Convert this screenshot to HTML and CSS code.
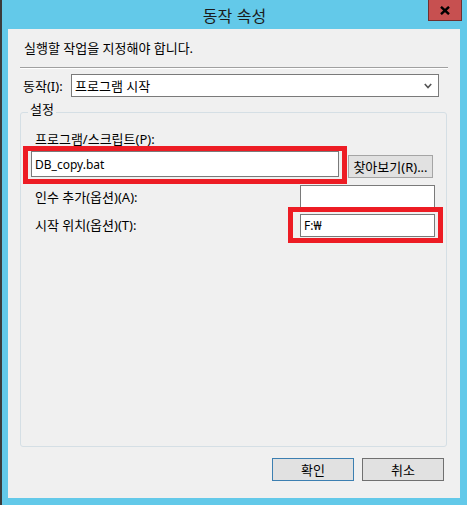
FILE: index.html
```html
<!DOCTYPE html>
<html lang="ko">
<head>
<meta charset="utf-8">
<title>동작 속성</title>
<link rel="stylesheet" href="styles.css">
</head>
<body>
<div class="window">
  <div class="titlebar">
    <div class="spacer"></div>
    <div class="title">동작 속성</div>
    <div class="close" aria-label="닫기">
      <svg width="10" height="9" viewBox="0 0 10 9"><path d="M1 0.8 L9 8.2 M9 0.8 L1 8.2" stroke="#000" stroke-width="2.4" fill="none"/></svg>
    </div>
  </div>
  <div class="panel">
    <p class="intro">실행할 작업을 지정해야 합니다.</p>
    <div class="sep"></div>
    <div class="action-row">
      <span class="action-label">동작(I):</span>
      <div class="combo">
        <span>프로그램 시작</span>
        <svg width="8" height="6" viewBox="0 0 8 6"><path d="M0.8 1 L4 4.6 L7.2 1" stroke="#555" stroke-width="1.6" fill="none"/></svg>
      </div>
    </div>
    <fieldset class="group">
      <legend>설정</legend>
      <div class="prog-label">프로그램/스크립트(P):</div>
      <div class="prog-row">
        <div class="mark mark-prog"><div class="textbox tall">DB_copy.bat</div></div>
        <button class="btn browse">찾아보기(R)...</button>
      </div>
      <div class="field-row args">
        <span class="field-label">인수 추가(옵션)(A):</span>
        <div class="textbox small"></div>
      </div>
      <div class="field-row start">
        <span class="field-label">시작 위치(옵션)(T):</span>
        <div class="mark mark-start"><div class="textbox small">F:₩</div></div>
      </div>
    </fieldset>
    <div class="buttons">
      <button class="btn dlg ok">확인</button>
      <button class="btn dlg">취소</button>
    </div>
  </div>
</div>
</body>
</html>
```
FILE: styles.css
```css
* { box-sizing: border-box; }
html, body { margin: 0; padding: 0; }
body {
  width: 467px;
  height: 505px;
  overflow: hidden;
  font-family: "Noto Sans", "Noto Sans CJK KR", sans-serif;
  font-size: 13px;
  color: #000;
  background: #63c9e9;
}
.window {
  width: 467px;
  height: 505px;
  background: #63c9e9;
  border-left: 2px solid #3b3b3b;
  display: flex;
  flex-direction: column;
}
.titlebar {
  height: 29px;
  display: grid;
  grid-template-columns: 1fr auto 1fr;
  align-items: start;
}
.title {
  font-family: "Noto Sans CJK KR", sans-serif;
  font-size: 16px;
  line-height: 30px;
  color: #1b1b1b;
}
.close {
  justify-self: end;
  margin-right: 5px;
  width: 34px;
  height: 21px;
  background: #c75050;
  border: 1px solid #6e3030;
  border-top: none;
  display: flex;
  align-items: center;
  justify-content: center;
}
.panel {
  margin-left: 6px;
  width: 452px;
  height: 469px;
  background: #f0f0f0;
  display: flex;
  flex-direction: column;
  padding-bottom: 17px;
}
.intro {
  margin: 11px 0 0 16px;
  line-height: 16px;
}
.sep {
  margin: 11px 12px 0 12px;
  height: 2px;
  border-top: 1px solid #a0a0a0;
  border-bottom: 1px solid #ffffff;
}
.action-row {
  margin-top: 5px;
  display: flex;
  align-items: center;
  padding: 0 21px 0 15px;
}
.action-label { width: 48px; line-height: 16px; }
.combo {
  flex: 1;
  height: 23px;
  background: #fff;
  border: 1px solid #7a7a7a;
  display: flex;
  align-items: center;
  justify-content: space-between;
  padding: 0 6px 0 3px;
}
.group {
  flex: 1;
  min-width: 0;
  margin: 5px 13px 11px 12px;
  padding: 10px 0 0 0;
  border: 1px solid #d5dfe5;
  border-radius: 3px;
}
.group legend {
  margin-left: 7px;
  padding: 0 2px 6px 2px;
  line-height: 14px;
}
.prog-label {
  margin-left: 14px;
  line-height: 14px;
}
.prog-row {
  display: flex;
  align-items: flex-start;
}
.mark {
  border: 5px solid #ed1c24;
}
.mark-prog {
  margin-left: 2px;
  padding: 0 3px 2px 3px;
}
.textbox {
  background: #fff;
  border: 1px solid #7a7a7a;
  display: flex;
  align-items: center;
  padding-left: 3px;
  font-size: 12px;
}
.textbox.tall { width: 308px; height: 26px; }
.textbox.small { width: 135px; height: 23px; }
.btn {
  font-family: "Noto Sans", "Noto Sans CJK KR", sans-serif;
  font-size: 13px;
  color: #000;
  background: #e1e1e1;
  border: 1px solid #707070;
  padding: 0;
  height: 23px;
  line-height: 20px;
}
.browse {
  margin: 9px 0 0 1px;
  width: 85px;
  border-color: #a5a5a5;
  white-space: nowrap;
}
.field-row {
  display: flex;
  align-items: center;
}
.field-label { margin-left: 14px; line-height: 16px; }
.args { margin-top: 1px; }
.args .textbox { margin-left: auto; margin-right: 11px; }
.start { margin-top: -1px; }
.mark-start {
  margin-left: auto;
  margin-right: 3px;
  padding: 2px 3px 1px 7px;
}
.buttons {
  display: flex;
  justify-content: flex-end;
  gap: 8px;
  margin-right: 16px;
}
.dlg { width: 82px; }
.ok { border-color: #3c7fb1; }
```
